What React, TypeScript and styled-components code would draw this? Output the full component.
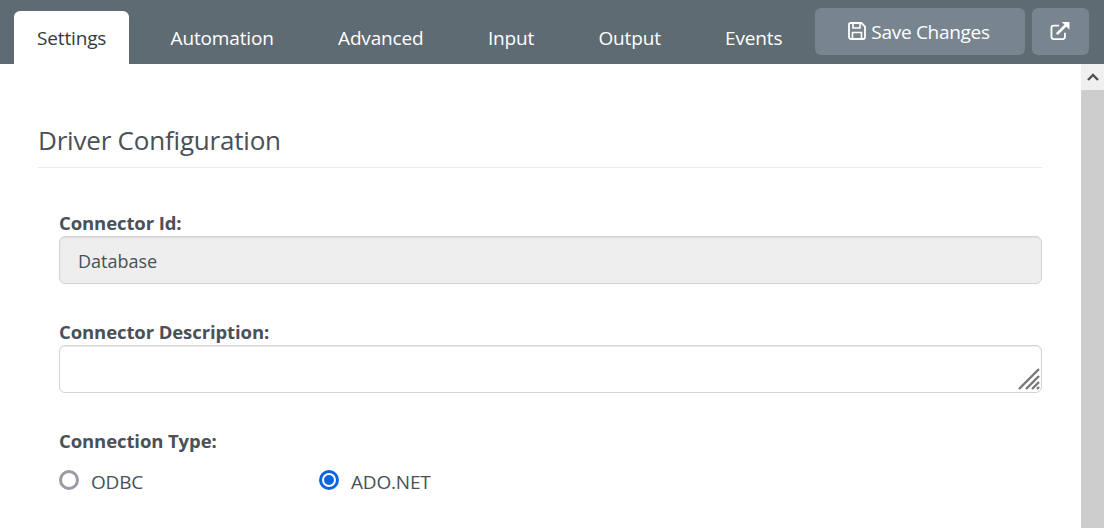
import React from 'react';
import styled, { createGlobalStyle } from 'styled-components';

const GlobalStyle = createGlobalStyle`
  html, body {
    margin: 0;
    height: 100%;
    overflow: hidden;
    background: #fff;
    font-family: "Open Sans", "Noto Sans", "Liberation Sans", sans-serif;
    color: #495057;
  }
`;

const Page = styled.div`
  display: flex;
  flex-direction: column;
  height: 528px;
`;

const TopBar = styled.nav`
  display: flex;
  align-items: flex-end;
  height: 64px;
  padding-left: 14px;
  background: #5f6b73;
  box-sizing: border-box;
`;

const Tabs = styled.div`
  display: flex;
  gap: 18.3px;
`;

const Tab = styled.a<{ $active?: boolean }>`
  display: block;
  height: 53px;
  line-height: 54px;
  padding: 0 23px;
  font-size: 19px;
  letter-spacing: -0.15px;
  border-radius: 6px 6px 0 0;
  color: ${(p) => (p.$active ? '#343a40' : '#fff')};
  background: ${(p) => (p.$active ? '#fff' : 'transparent')};
`;

const Actions = styled.div`
  display: flex;
  gap: 7px;
  margin-left: auto;
  margin-right: 15px;
  padding-bottom: 9px;
`;

const ActionButton = styled.button<{ $width: number }>`
  display: flex;
  align-items: center;
  justify-content: center;
  gap: 5px;
  width: ${(p) => p.$width}px;
  height: 47px;
  padding: 0 2px 0 0;
  border: 0;
  border-radius: 6px;
  background: #78858f;
  color: #fff;
  font: inherit;
  font-size: 19px;
  letter-spacing: -0.3px;

  svg {
    margin-top: -2px;
  }
`;

const Body = styled.div`
  display: flex;
  flex: 1;
  min-height: 0;
`;

const Content = styled.main`
  flex: 1;
  padding: 0 39px 0 38px;
`;

const Heading = styled.h2`
  margin: 0;
  padding-top: 57px;
  height: 104px;
  box-sizing: border-box;
  border-bottom: 1px solid #e9ecef;
  font-size: 26px;
  font-weight: 400;
  line-height: 38px;
  color: #495057;
  letter-spacing: -0.2px;
`;

const Fields = styled.div`
  padding: 42px 0 0 21px;
`;

const Field = styled.div`
  position: relative;
  margin-bottom: 35px;
`;

const Label = styled.label`
  display: block;
  height: 26px;
  line-height: 26px;
  font-size: 18.5px;
  font-weight: 700;
  letter-spacing: -0.1px;
  color: #495057;
`;

const TextInput = styled.div<{ $disabled?: boolean }>`
  height: 48px;
  box-sizing: border-box;
  padding: 0 18px;
  line-height: 48px;
  font-size: 18px;
  color: #495057;
  border: 1px solid #ced4da;
  border-radius: 6px;
  background: ${(p) => (p.$disabled ? '#eeeeee' : '#fff')};
  box-shadow: inset 0 1px 1px rgba(0, 0, 0, 0.075);
`;

const Grip = styled.svg`
  position: absolute;
  right: 2px;
  bottom: 3px;
`;

const RadioRow = styled.div`
  display: flex;
  margin-top: 13px;
`;

const RadioItem = styled.div<{ $width: number }>`
  display: flex;
  align-items: center;
  width: ${(p) => p.$width}px;
  height: 30px;
`;

const RadioDot = styled.span<{ $checked?: boolean }>`
  width: 20px;
  height: 20px;
  box-sizing: border-box;
  border-radius: 50%;
  border: 3px solid ${(p) => (p.$checked ? '#0d64e0' : '#9a9aa5')};
  background: #fff;
  margin-top: -5px;
  display: flex;
  align-items: center;
  justify-content: center;

  &::after {
    content: '';
    display: ${(p) => (p.$checked ? 'block' : 'none')};
    width: 10px;
    height: 10px;
    border-radius: 50%;
    background: #0d64e0;
  }
`;

const RadioText = styled.span`
  margin-left: 12px;
  font-size: 19px;
  letter-spacing: -0.2px;
  color: #495057;
`;

const ScrollTrack = styled.div`
  width: 23px;
  background: #cdcdcd;
`;

const ScrollUp = styled.div`
  display: flex;
  align-items: center;
  justify-content: center;
  height: 26px;
  background: #f0f0f0;
`;

const tabs = ['Settings', 'Automation', 'Advanced', 'Input', 'Output', 'Events'];

export default function App() {
  return (
    <Page>
      <GlobalStyle />
      <TopBar>
        <Tabs>
          {tabs.map((t, i) => (
            <Tab key={t} $active={i === 0}>
              {t}
            </Tab>
          ))}
        </Tabs>
        <Actions>
          <ActionButton $width={210}>
            <svg width="18" height="18" viewBox="0 0 18 18">
              <path d="M2.5 1h11L17 4.500V15a2 2 0 0 1-2 2H3a2 2 0 0 1-2-2V2.500A1.500 1.500 0 0 1 2.500 1z" stroke="#fff" strokeWidth="1.800" fill="none" />
              <path d="M5 1v5h7V1M4.500 17v-6.500h9V17" stroke="#fff" strokeWidth="1.600" fill="none" />
            </svg>
            Save Changes
          </ActionButton>
          <ActionButton $width={57}>
            <svg width="20" height="18" viewBox="0 0 22 20">
              <path d="M10 4H4a2.500 2.500 0 0 0-2.500 2.500v10A2.500 2.500 0 0 0 4 19h10a2.500 2.500 0 0 0 2.500-2.500V12" stroke="#fff" strokeWidth="2" fill="none" />
              <path d="M7.500 13.500 18 3" stroke="#fff" strokeWidth="3" fill="none" />
              <path d="M13 0h8.500v8.500z" fill="#fff" />
            </svg>
          </ActionButton>
        </Actions>
      </TopBar>
      <Body>
        <Content>
          <Heading>Driver Configuration</Heading>
          <Fields>
            <Field>
              <Label>Connector Id:</Label>
              <TextInput $disabled>Database</TextInput>
            </Field>
            <Field>
              <Label>Connector Description:</Label>
              <TextInput />
              <Grip width="22" height="22" viewBox="0 0 22 22">
                <path d="M1 21 21 1M8 21 21 8M14 21 21 14M19 21 21 19" stroke="#777" strokeWidth="2.400" fill="none" />
              </Grip>
            </Field>
            <Field>
              <Label>Connection Type:</Label>
              <RadioRow>
                <RadioItem $width={260}>
                  <RadioDot />
                  <RadioText>ODBC</RadioText>
                </RadioItem>
                <RadioItem $width={200}>
                  <RadioDot $checked />
                  <RadioText>ADO.NET</RadioText>
                </RadioItem>
              </RadioRow>
            </Field>
          </Fields>
        </Content>
        <ScrollTrack>
          <ScrollUp>
            <svg width="12" height="8" viewBox="0 0 12 8">
              <path d="M1 7 6 2l5 5" stroke="#505050" strokeWidth="2.400" fill="none" />
            </svg>
          </ScrollUp>
        </ScrollTrack>
      </Body>
    </Page>
  );
}
